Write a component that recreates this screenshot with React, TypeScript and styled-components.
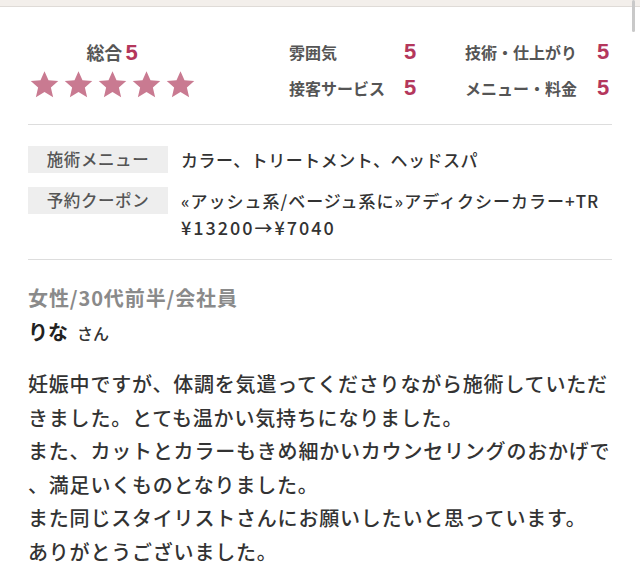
import React from "react";
import styled, { createGlobalStyle } from "styled-components";

const Global = createGlobalStyle`
  html, body { margin: 0; padding: 0; background: #fff; }
  body { font-family: "Noto Sans CJK JP", "Noto Sans", sans-serif; color: #333; }
`;

const Page = styled.div`
  position: relative;
  width: 640px;
  height: 578px;
  overflow: hidden;
  background: #fff;
`;

const TopBand = styled.div`
  height: 6px;
  background: #f3efeb;
  border-bottom: 1px solid #dfdbd7;
`;

const ScrollThumb = styled.div`
  position: absolute;
  right: 5px;
  top: 0;
  width: 3px;
  height: 32px;
  border-radius: 2px;
  background: #c9c9c9;
`;

const Content = styled.div`
  padding: 0 28px;
`;

const RatingSection = styled.section`
  display: flex;
  align-items: flex-start;
  padding: 27px 0 18px;
  border-bottom: 1px solid #dddddd;
`;

const Overall = styled.div`
  width: 168px;
  display: flex;
  flex-direction: column;
  align-items: center;
`;

const OverallTitle = styled.div`
  height: 36px;
  line-height: 36px;
  font-size: 18px;
  font-weight: 700;
  color: #555;
  display: flex;
  align-items: baseline;
  gap: 3px;
`;

const Num = styled.span<{ $size?: number }>`
  font-family: "Liberation Sans", Arial, sans-serif;
  font-weight: 700;
  font-size: ${(p) => p.$size ?? 22}px;
  color: #b4375c;
`;

const Stars = styled.div`
  display: flex;
  gap: 3px;
`;

const StarIcon = styled.svg`
  width: 31px;
  height: 30px;
  display: block;
`;

const ScoreGrid = styled.div`
  margin-left: 93px;
  display: grid;
  grid-template-columns: 115px 61px 132px auto;
  grid-auto-rows: 36px;
  align-items: center;
`;

const ScoreLabel = styled.span`
  font-size: 16px;
  font-weight: 700;
  color: #555;
  white-space: nowrap;
`;

const MenuSection = styled.section`
  display: flex;
  flex-direction: column;
  gap: 14px;
  padding: 21px 0 18px;
  border-bottom: 1px solid #dddddd;
`;

const MenuRow = styled.div`
  display: flex;
  align-items: flex-start;
  gap: 13px;
`;

const MenuLabel = styled.div`
  flex: 0 0 140px;
  height: 27px;
  line-height: 27px;
  background: #eeeeee;
  text-align: center;
  font-size: 16.5px;
  font-weight: 500;
  color: #555;
  letter-spacing: 0.6px;
`;

const MenuValue = styled.div`
  font-size: 17px;
  line-height: 27px;
  font-weight: 500;
  color: #333;
  letter-spacing: 0.5px;
  white-space: nowrap;
`;

const Spaced = styled.span<{ $size?: number; $ls: number }>`
  font-size: ${(p) => p.$size ?? 17}px;
  letter-spacing: ${(p) => p.$ls}px;
`;

const Review = styled.section`
  padding-top: 24px;
`;

const Profile = styled.div`
  font-size: 20px;
  line-height: 28px;
  font-weight: 700;
  letter-spacing: 0.9px;
  color: #8a8a8a;
`;

const Name = styled.div`
  margin-top: 6px;
  line-height: 28px;
  font-size: 20px;
  font-weight: 700;
  color: #222;
`;

const Honorific = styled.span`
  margin-left: 9px;
  font-size: 16px;
  font-weight: 500;
  color: #333;
`;

const Body = styled.p`
  margin: 20px 0 0;
  font-size: 20px;
  line-height: 33.5px;
  letter-spacing: 0.8px;
  font-weight: 500;
  color: #333;
  white-space: nowrap;
`;

const Star = () => (
  <StarIcon viewBox="0 0 24 24">
    <path
      fill="#c97a91"
      d="M12 1l3.2 7.2 7.8.6-5.9 5.2 1.8 7.8L12 17.6l-6.9 4.2 1.8-7.8L1 8.8l7.8-.6z"
    />
  </StarIcon>
);

const scores: [string, string][] = [
  ["雰囲気", "5"],
  ["技術・仕上がり", "5"],
  ["接客サービス", "5"],
  ["メニュー・料金", "5"],
];

export default function App() {
  return (
    <Page>
      <Global />
      <TopBand />
      <ScrollThumb />
      <Content>
        <RatingSection>
          <Overall>
            <OverallTitle>
              総合<Num $size={22}>5</Num>
            </OverallTitle>
            <Stars>
              {[0, 1, 2, 3, 4].map((i) => (
                <Star key={i} />
              ))}
            </Stars>
          </Overall>
          <ScoreGrid>
            {scores.map(([label, n]) => (
              <React.Fragment key={label}>
                <ScoreLabel>{label}</ScoreLabel>
                <Num>{n}</Num>
              </React.Fragment>
            ))}
          </ScoreGrid>
        </RatingSection>

        <MenuSection>
          <MenuRow>
            <MenuLabel>施術メニュー</MenuLabel>
            <MenuValue>カラー、トリートメント、ヘッドスパ</MenuValue>
          </MenuRow>
          <MenuRow>
            <MenuLabel>予約クーポン</MenuLabel>
            <MenuValue>
              <Spaced $ls={1}>«アッシュ系/ベージュ系に»アディクシーカラー+TR</Spaced>
              <br />
              <Spaced $size={18} $ls={2}>¥13200→¥7040</Spaced>
            </MenuValue>
          </MenuRow>
        </MenuSection>

        <Review>
          <Profile>女性/30代前半/会社員</Profile>
          <Name>
            りな<Honorific>さん</Honorific>
          </Name>
          <Body>
            妊娠中ですが、体調を気遣ってくださりながら施術していただ
            <br />
            きました。とても温かい気持ちになりました。
            <br />
            また、カットとカラーもきめ細かいカウンセリングのおかげで
            <br />
            、満足いくものとなりました。
            <br />
            また同じスタイリストさんにお願いしたいと思っています。
            <br />
            ありがとうございました。
          </Body>
        </Review>
      </Content>
    </Page>
  );
}
